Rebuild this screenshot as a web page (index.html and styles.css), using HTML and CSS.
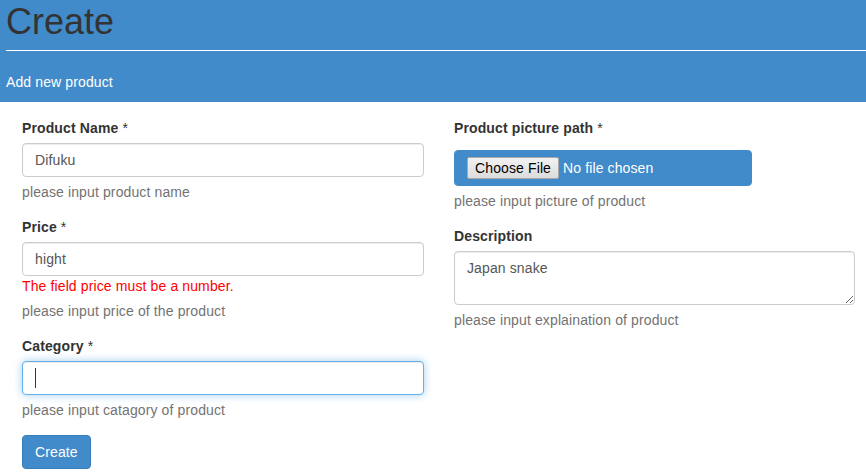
FILE: index.html
```html
<!DOCTYPE html>
<html lang="en">
<head>
<meta charset="utf-8">
<title>Create</title>
<link rel="stylesheet" href="styles.css">
</head>
<body>
<header class="page-header">
  <h1 class="title">Create</h1>
  <hr class="rule">
  <div class="subtitle">Add new product</div>
</header>
<form class="form">
  <div class="col">
    <div class="form-group">
      <label class="label">Product Name <span class="req">*</span></label>
      <input class="form-control" type="text" value="Difuku">
      <span class="help-block">please input product name</span>
    </div>
    <div class="form-group">
      <label class="label">Price <span class="req">*</span></label>
      <input class="form-control" type="text" value="hight">
      <span class="field-error">The field price must be a number.</span>
      <span class="help-block">please input price of the product</span>
    </div>
    <div class="form-group">
      <label class="label">Category <span class="req">*</span></label>
      <div class="focus-wrap">
        <input class="form-control is-focused" type="text" value="">
        <span class="caret-line"></span>
      </div>
      <span class="help-block">please input catagory of product</span>
    </div>
    <div class="actions">
      <button class="btn-primary" type="button">Create</button>
    </div>
  </div>
  <div class="col">
    <div class="form-group">
      <label class="label">Product picture path <span class="req">*</span></label>
      <div class="file-box">
        <button class="file-btn" type="button">Choose File</button>
        <span class="file-name">No file chosen</span>
      </div>
      <span class="help-block">please input picture of product</span>
    </div>
    <div class="form-group">
      <label class="label">Description</label>
      <textarea class="form-control textarea" rows="2">Japan snake</textarea>
      <span class="help-block">please input explaination of product</span>
    </div>
  </div>
</form>
</body>
</html>
```

FILE: styles.css
```css
* { box-sizing: border-box; }

html, body {
  margin: 0;
  padding: 0;
  background: #fff;
}

body {
  font-family: "Liberation Sans", Arial, sans-serif;
  font-size: 14px;
  line-height: 20px;
  letter-spacing: 0.12px;
  color: #333;
  overflow: hidden;
}

.page-header {
  background: #428bca;
  padding: 0 0 10px 6px;
}

.title {
  margin: 0;
  font-size: 36px;
  font-weight: normal;
  line-height: 44px;
  letter-spacing: 0;
  color: #333;
}

.rule {
  margin: 6px 0 0 0;
  border: 0;
  border-top: 1px solid #fff;
  height: 0;
}

.subtitle {
  margin-top: 21px;
  color: #fff;
  line-height: 20px;
}

.form {
  display: grid;
  grid-template-columns: 402px 401px;
  column-gap: 30px;
  padding: 16px 0 0 22px;
  align-items: start;
}

.col {
  display: flex;
  flex-direction: column;
}

.form-group {
  display: flex;
  flex-direction: column;
  align-items: flex-start;
  margin-bottom: 15px;
}

.label {
  font-weight: bold;
  margin-bottom: 5px;
  line-height: 20px;
}

.req {
  font-weight: normal;
}

.form-control {
  display: block;
  width: 100%;
  height: 34px;
  padding: 6px 12px;
  font-family: inherit;
  font-size: 14px;
  line-height: 20px;
  letter-spacing: 0.12px;
  color: #555;
  background: #fff;
  border: 1px solid #ccc;
  border-radius: 4px;
  box-shadow: inset 0 1px 1px rgba(0,0,0,0.075);
  outline: none;
  margin: 0;
}

.focus-wrap {
  position: relative;
  width: 100%;
}

.form-control.is-focused {
  border-color: #66afe9;
  box-shadow: inset 0 1px 1px rgba(0,0,0,0.075), 0 0 8px rgba(102,175,233,0.6);
}

.caret-line {
  position: absolute;
  left: 13px;
  top: 7px;
  width: 1px;
  height: 20px;
  background: #333;
}

.textarea {
  height: 54px;
  resize: vertical;
}

.help-block {
  display: block;
  margin-top: 5px;
  color: #737373;
  line-height: 20px;
}

.field-error {
  display: block;
  color: #ff0000;
  line-height: 20px;
}

.file-box {
  display: flex;
  align-items: center;
  width: 298px;
  height: 36px;
  margin-top: 7px;
  padding: 0 12px;
  background: #428bca;
  border: 1px solid #428bca;
  border-radius: 4px;
}

.file-btn {
  height: 22px;
  padding: 0 7px;
  font-family: inherit;
  font-size: 14px;
  letter-spacing: 0.12px;
  color: #000;
  background: linear-gradient(#f2f2f2, #dcdcdc);
  border: 1px solid #a9a9a9;
  border-radius: 2px;
  margin: 0;
}

.file-name {
  margin-left: 4px;
  color: #fff;
}

.actions {
  display: flex;
}

.btn-primary {
  height: 34px;
  padding: 6px 12px;
  font-family: inherit;
  font-size: 14px;
  line-height: 20px;
  letter-spacing: 0.12px;
  color: #fff;
  background: #428bca;
  border: 1px solid #357ebd;
  border-radius: 4px;
  margin: 0;
}
```
